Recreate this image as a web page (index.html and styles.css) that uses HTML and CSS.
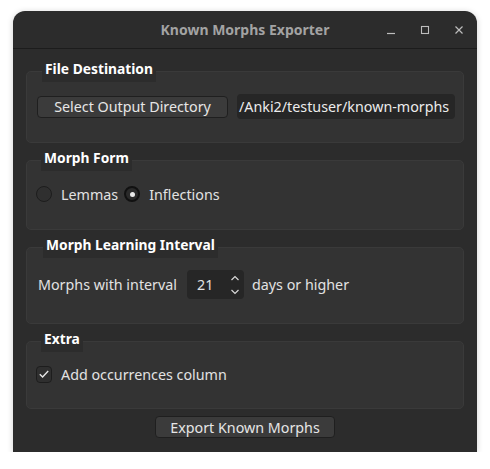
FILE: index.html
```html
<!DOCTYPE html>
<html>
<head>
<meta charset="utf-8">
<link rel="stylesheet" href="styles.css">
</head>
<body>
<div class="window">
  <div class="titlebar">
    <div class="tb-side"></div>
    <div class="title">Known Morphs Exporter</div>
    <div class="tb-side controls">
      <span class="ctl"><svg width="10" height="10" viewBox="0 0 10 10"><path d="M1 8.5H9" stroke="#bdbdbd" stroke-width="1.2"/></svg></span>
      <span class="ctl"><svg width="10" height="10" viewBox="0 0 10 10"><rect x="1.5" y="1.5" width="7" height="7" fill="none" stroke="#bdbdbd" stroke-width="1.1"/></svg></span>
      <span class="ctl"><svg width="10" height="10" viewBox="0 0 10 10"><path d="M1.5 1.5L8.5 8.5M8.5 1.5L1.5 8.5" stroke="#bdbdbd" stroke-width="1.2"/></svg></span>
    </div>
  </div>
  <div class="content">
    <fieldset class="group g1">
      <legend>File Destination</legend>
      <div class="row">
        <button class="btn">Select Output Directory</button>
        <div class="lineedit">/Anki2/testuser/known-morphs</div>
      </div>
    </fieldset>
    <fieldset class="group g2">
      <legend>Morph Form</legend>
      <div class="row radios">
        <label class="opt"><span class="radio"></span><span class="lbl-lemmas">Lemmas</span></label>
        <label class="opt"><span class="radio checked"></span><span>Inflections</span></label>
      </div>
    </fieldset>
    <fieldset class="group g3">
      <legend>Morph Learning Interval</legend>
      <div class="row interval">
        <span>Morphs with interval</span>
        <div class="spin">
          <span class="spin-val">21</span>
          <span class="spin-arrows">
            <svg width="10" height="22" viewBox="0 0 10 22"><path d="M1.5 6L5 2.5L8.5 6M1.5 16L5 19.5L8.5 16" fill="none" stroke="#d8d8d8" stroke-width="1.2"/></svg>
          </span>
        </div>
        <span>days or higher</span>
      </div>
    </fieldset>
    <fieldset class="group g4">
      <legend>Extra</legend>
      <div class="row">
        <label class="opt"><span class="check"><svg width="12" height="12" viewBox="0 0 12 12"><path d="M1.8 6.2L4.6 9L10.2 3" fill="none" stroke="#e6e6e6" stroke-width="1.4"/></svg></span><span>Add occurrences column</span></label>
      </div>
    </fieldset>
    <div class="footer">
      <button class="btn export">Export Known Morphs</button>
    </div>
  </div>
</div>
</body>
</html>
```

FILE: styles.css
```css
* { box-sizing: border-box; }
html, body { margin: 0; padding: 0; background: #ffffff; }
body {
  font-family: "Noto Sans", "DejaVu Sans", sans-serif;
  font-size: 14.3px;
  color: #e2e2e2;
}
.window {
  margin: 11px 0 0 13px;
  width: 464px;
  height: 441px;
  background: #2c2c2c;
  border-radius: 12px 12px 0 0;
  box-shadow: 0 1px 6px rgba(0,0,0,0.18);
  display: flex;
  flex-direction: column;
}
.titlebar {
  height: 38px;
  border-bottom: 1px solid #1c1c1c;
  display: grid;
  grid-template-columns: 1fr auto 1fr;
  align-items: center;
}
.title {
  font-weight: bold;
  font-size: 14px;
  color: #a3a3a3;
}
.controls {
  display: flex;
  justify-content: flex-end;
  padding-right: 1px;
}
.ctl {
  width: 34px;
  height: 20px;
  display: flex;
  align-items: center;
  justify-content: center;
}
.ctl svg { display: block; }
.content {
  flex: 1;
  padding: 11px 13px 0 13px;
  display: flex;
  flex-direction: column;
  gap: 6px;
}
.group {
  margin: 0;
  border: 1px solid #3a3a3a;
  border-radius: 5px;
  background: #333333;
  padding: 12px 8px 23px 10px;
  min-width: 0;
}
.group legend {
  font-weight: bold;
  font-size: 13.8px;
  line-height: 18px;
  color: #ffffff;
  background: #2c2c2c;
  padding: 0 3px 4px 3px;
  margin-left: 5px;
}
.row {
  display: flex;
  align-items: center;
}
.g1 .row { gap: 9px; height: 25px; }
.g2 { padding-left: 9px; padding-bottom: 23px; padding-top: 11px; }
.g2 .row { height: 24px; gap: 6px; }
.g3 { padding-left: 11px; padding-bottom: 24px; }
.g3 .row { height: 29px; }
.g4 { padding-left: 9px; padding-top: 10px; padding-bottom: 22px; }
.g4 .row { height: 24px; }
.btn {
  font: inherit;
  color: #e6e6e6;
  background: #3b3b3b;
  border: 1px solid #1f1f1f;
  border-radius: 4px;
  height: 22px;
  padding: 0 10px;
  display: flex;
  align-items: center;
  white-space: nowrap;
}
.g1 .btn { width: 191px; justify-content: center; flex: none; }
.lineedit {
  flex: 1;
  min-width: 0;
  height: 25px;
  background: #262626;
  border-radius: 4px;
  display: flex;
  align-items: center;
  padding-left: 2px;
  white-space: nowrap;
  overflow: hidden;
  color: #ececec;
}
.opt {
  display: flex;
  align-items: center;
  gap: 9px;
}
.radio {
  width: 16px;
  height: 16px;
  border-radius: 50%;
  border: 1px solid #1d1d1d;
  background: #2f2f2f;
  display: flex;
  align-items: center;
  justify-content: center;
}
.radio.checked {
  border: 2px solid #111111;
  background: #2a2a2a;
}
.radio.checked::after {
  content: "";
  width: 5px;
  height: 5px;
  border-radius: 50%;
  background: #e8e8e8;
}
.interval span:first-child { margin-right: 10px; }
.spin {
  width: 57px;
  height: 29px;
  background: #262626;
  border-radius: 4px;
  display: flex;
  align-items: center;
  justify-content: space-between;
  padding: 0 4px 0 10px;
  margin-right: 8px;
}
.spin-arrows svg { display: block; }
.check {
  width: 16px;
  height: 17px;
  border: 1px solid #1d1d1d;
  border-radius: 4px;
  background: #2f2f2f;
  display: flex;
  align-items: center;
  justify-content: center;
}
.check svg { display: block; }
.footer {
  display: flex;
  justify-content: center;
  padding-top: 1px;
}
.export { width: 180px; justify-content: center; }
```
